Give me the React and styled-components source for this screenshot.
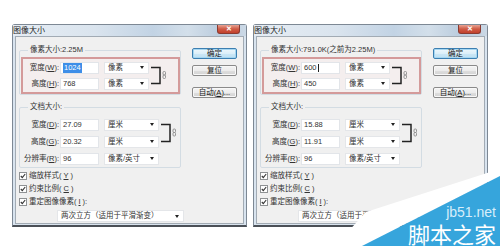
import styled, { createGlobalStyle } from 'styled-components';

const GlobalStyle = createGlobalStyle`
  html, body {
    margin: 0;
    padding: 0;
    background: #fff;
  }
  body {
    width: 500px;
    height: 246px;
    overflow: hidden;
    font-family: "Liberation Sans", "Noto Sans CJK SC", sans-serif;
    color: #2b2b2b;
  }
`;

const Page = styled.div`
  position: relative;
  display: flex;
  gap: 6px;
  width: 500px;
  height: 246px;
  padding: 24px 0 0 12px;
  box-sizing: border-box;
`;

const Dialog = styled.div`
  width: 235px;
  height: 203px;
  box-sizing: border-box;
  display: flex;
  flex-direction: column;
  background: #d9e4ef;
  border: 1px solid #7d8894;
  border-bottom: 2px solid #4b5057;
  border-radius: 3px 3px 0 0;
  padding: 0 2px 1px;
  font-size: 7.5px;
  line-height: 10px;
`;

const TitleBar = styled.div`
  height: 11px;
  margin: 0 -2px;
  padding-right: 6px;
  display: flex;
  align-items: flex-start;
  justify-content: space-between;
  background: linear-gradient(90deg, #e6edf4 0%, #dae4ee 35%, #c2d3e4 60%, #d3dfea 75%, #b8cadc 90%, #ccd9e6 100%);
`;

const Title = styled.span`
  font-size: 8px;
  line-height: 11px;
  color: #1c1c1c;
`;

const CloseButton = styled.span`
  width: 23px;
  height: 9px;
  border-radius: 0 0 3px 3px;
  background: linear-gradient(#e8a393, #cf5a45 50%, #c2402b);
  border: 1px solid #8a3a30;
  border-top: none;
  box-sizing: border-box;
  color: #fff;
  font-size: 7px;
  line-height: 8px;
  text-align: center;
  font-weight: bold;
`;

const Body = styled.div`
  flex: 1;
  background: #f0f0f0;
  border: 1px solid #a2abb4;
  display: grid;
  grid-template-columns: 162px 45px;
  column-gap: 11px;
  align-items: start;
  padding: 8px 0 0 3px;
`;

const MainColumn = styled.div`
  display: flex;
  flex-direction: column;
`;

const Group = styled.fieldset`
  margin: ${(p) => (p.$first ? '0' : '7px 0 0')};
  padding: ${(p) => (p.$first ? '0 0 0 1px' : '6px 0 2px 1px')};
  border: 1px solid #d3dce3;
  border-radius: 2px;
  min-inline-size: 0;
`;

const Legend = styled.legend`
  margin-left: 7px;
  padding: 0 2px;
  font-size: 7.5px;
  line-height: 10px;
  color: #333;
`;

const RedBox = styled.div`
  margin-top: 2px;
  border: 2px solid #d49a9a;
  background: #f4eeee;
  padding: 2px 0;
`;

const FieldGrid = styled.div`
  display: grid;
  grid-template-columns: ${(p) => p.$labelW}px 40px ${(p) => p.$selW + 5}px auto;
  grid-auto-rows: 13px;
  row-gap: ${(p) => p.$rowGap}px;
  align-items: center;
`;

const Label = styled.span`
  text-align: right;
  white-space: nowrap;
  color: #333;
`;

const Field = styled.div`
  margin-left: 1px;
  height: 12px;
  box-sizing: border-box;
  background: #fff;
  border: 1px solid #e2e5e9;
  padding-left: 2px;
  display: flex;
  align-items: center;
  color: #333;
  white-space: nowrap;
`;

const Selected = styled.span`
  background: #3d8ee8;
  color: #fff;
  padding: 0 1px;
`;

const Caret = styled.span`
  display: inline-block;
  width: 1px;
  height: 8px;
  margin-left: 1px;
  background: #222;
`;

const Select = styled.div`
  margin-left: 5px;
  height: 12px;
  box-sizing: border-box;
  background: #fff;
  border: 1px solid #e4e6e9;
  padding: 0 4px 0 3px;
  display: flex;
  align-items: center;
  justify-content: space-between;
  white-space: nowrap;
  color: #333;
`;

const Arrow = styled.span`
  width: 0;
  height: 0;
  border-left: 2px solid transparent;
  border-right: 2px solid transparent;
  border-top: 3px solid #222;
`;

const BracketCell = styled.div`
  grid-column: 4;
  grid-row: 1 / span 2;
  align-self: stretch;
  margin-left: 2px;
`;

const CheckList = styled.div`
  margin-top: 1px;
  display: flex;
  flex-direction: column;
`;

const CheckRow = styled.div`
  height: 13px;
  display: flex;
  align-items: center;
  gap: 2px;
  white-space: nowrap;
  color: #333;
`;

const Box = styled.span`
  width: 8px;
  height: 8px;
  box-sizing: border-box;
  border: 1px solid #8f9294;
  background: #fff;
  display: flex;
`;

const ResampleSelect = styled(Select)`
  margin: 2px 0 0 38px;
  width: 127px;
  padding-left: 3px;
`;

const ButtonColumn = styled.div`
  display: flex;
  flex-direction: column;
  padding-top: 3px;
`;

const Button = styled.div`
  height: 11px;
  margin-top: ${(p) => p.$gap || 0}px;
  box-sizing: border-box;
  border: 1px solid ${(p) => (p.$primary ? '#3c7fb1' : '#8a8a8a')};
  border-radius: 2px;
  background: ${(p) =>
    p.$primary
      ? 'linear-gradient(#eef7fc, #dceff9 50%, #cbe7f6 51%, #bfe0f2)'
      : 'linear-gradient(#f4f4f4, #ececec 50%, #dedede 51%, #d3d3d3)'};
  box-shadow: inset 0 0 0 1px ${(p) => (p.$primary ? '#a6d7f2' : '#f8f8f8')};
  text-align: center;
  font-size: 7.5px;
  line-height: 9px;
  color: #222;
`;

const Overlay = styled.svg`
  position: absolute;
  left: 0;
  top: 0;
  pointer-events: none;
`;

function Bracket({ h }) {
  return (
    <svg width="16" height={h} viewBox={`0 0 16 ${h}`}>
      <path d={`M0 6.5 H9 V${h - 6.5} H0`} fill="none" stroke="#222" strokeWidth="1.5" />
      <rect x="12" y={h / 2 - 4} width="2.5" height="3.5" rx="1" fill="none" stroke="#8a8a8a" strokeWidth="0.9" />
      <rect x="12" y={h / 2 - 0.5} width="2.5" height="3.5" rx="1" fill="none" stroke="#8a8a8a" strokeWidth="0.9" />
    </svg>
  );
}

function Check() {
  return (
    <Box>
      <svg width="6" height="6" viewBox="0 0 6 6">
        <path d="M0.8 3 L2.3 4.6 L5.2 1" fill="none" stroke="#333" strokeWidth="1.1" />
      </svg>
    </Box>
  );
}

function ImageSizeDialog({ pixelLabel, width, height, docW, docH }) {
  return (
    <Dialog>
      <TitleBar>
        <Title>图像大小</Title>
        <CloseButton>✕</CloseButton>
      </TitleBar>
      <Body>
        <MainColumn>
          <Group $first>
            <Legend>{pixelLabel}</Legend>
            <RedBox>
              <FieldGrid $labelW={36} $selW={45} $rowGap={3}>
                <Label>宽度(<u>W</u>):</Label>
                <Field>{width}</Field>
                <Select>像素<Arrow /></Select>
                <BracketCell><Bracket h={29} /></BracketCell>
                <Label>高度(<u>H</u>):</Label>
                <Field>{height}</Field>
                <Select>像素<Arrow /></Select>
              </FieldGrid>
            </RedBox>
          </Group>
          <Group>
            <Legend>文档大小:</Legend>
            <FieldGrid $labelW={38} $selW={55} $rowGap={4}>
              <Label>宽度(<u>D</u>):</Label>
              <Field>{docW}</Field>
              <Select>厘米<Arrow /></Select>
              <BracketCell><Bracket h={30} /></BracketCell>
              <Label>高度(<u>G</u>):</Label>
              <Field>{docH}</Field>
              <Select>厘米<Arrow /></Select>
              <Label>分辨率(<u>R</u>):</Label>
              <Field>96</Field>
              <Select>像素/英寸<Arrow /></Select>
            </FieldGrid>
          </Group>
          <CheckList>
            <CheckRow><Check />缩放样式(<u>Y</u>)</CheckRow>
            <CheckRow><Check />约束比例(<u>C</u>)</CheckRow>
            <CheckRow><Check />重定图像像素(<u>I</u>):</CheckRow>
          </CheckList>
          <ResampleSelect>两次立方（适用于平滑渐变）<Arrow /></ResampleSelect>
        </MainColumn>
        <ButtonColumn>
          <Button $primary>确定</Button>
          <Button $gap={6}>复位</Button>
          <Button $gap={11}>自动(<u>A</u>)...</Button>
        </ButtonColumn>
      </Body>
    </Dialog>
  );
}

export default function App() {
  return (
    <>
      <GlobalStyle />
      <Page>
        <ImageSizeDialog
          pixelLabel="像素大小:2.25M"
          width={<Selected>1024</Selected>}
          height="768"
          docW="27.09"
          docH="20.32"
        />
        <ImageSizeDialog
          pixelLabel="像素大小:791.0K(之前为2.25M)"
          width={<>600<Caret /></>}
          height="450"
          docW="15.88"
          docH="11.91"
        />
        <Overlay width="500" height="246" viewBox="0 0 500 246">
          <polygon points="335,246 366,212 487,173 500,169 500,176 362,246" fill="#ffffff" />
          <polygon points="362,246 500,176 500,246" fill="#36a5dc" />
          <text x="496" y="217" textAnchor="end" fill="#d7eefa" fontSize="14" fontFamily="Liberation Sans, sans-serif">jb51.net</text>
          <text x="496" y="243" textAnchor="end" fill="#ffffff" fontSize="22" fontFamily="Noto Sans CJK SC, sans-serif">脚本之家</text>
        </Overlay>
      </Page>
    </>
  );
}
